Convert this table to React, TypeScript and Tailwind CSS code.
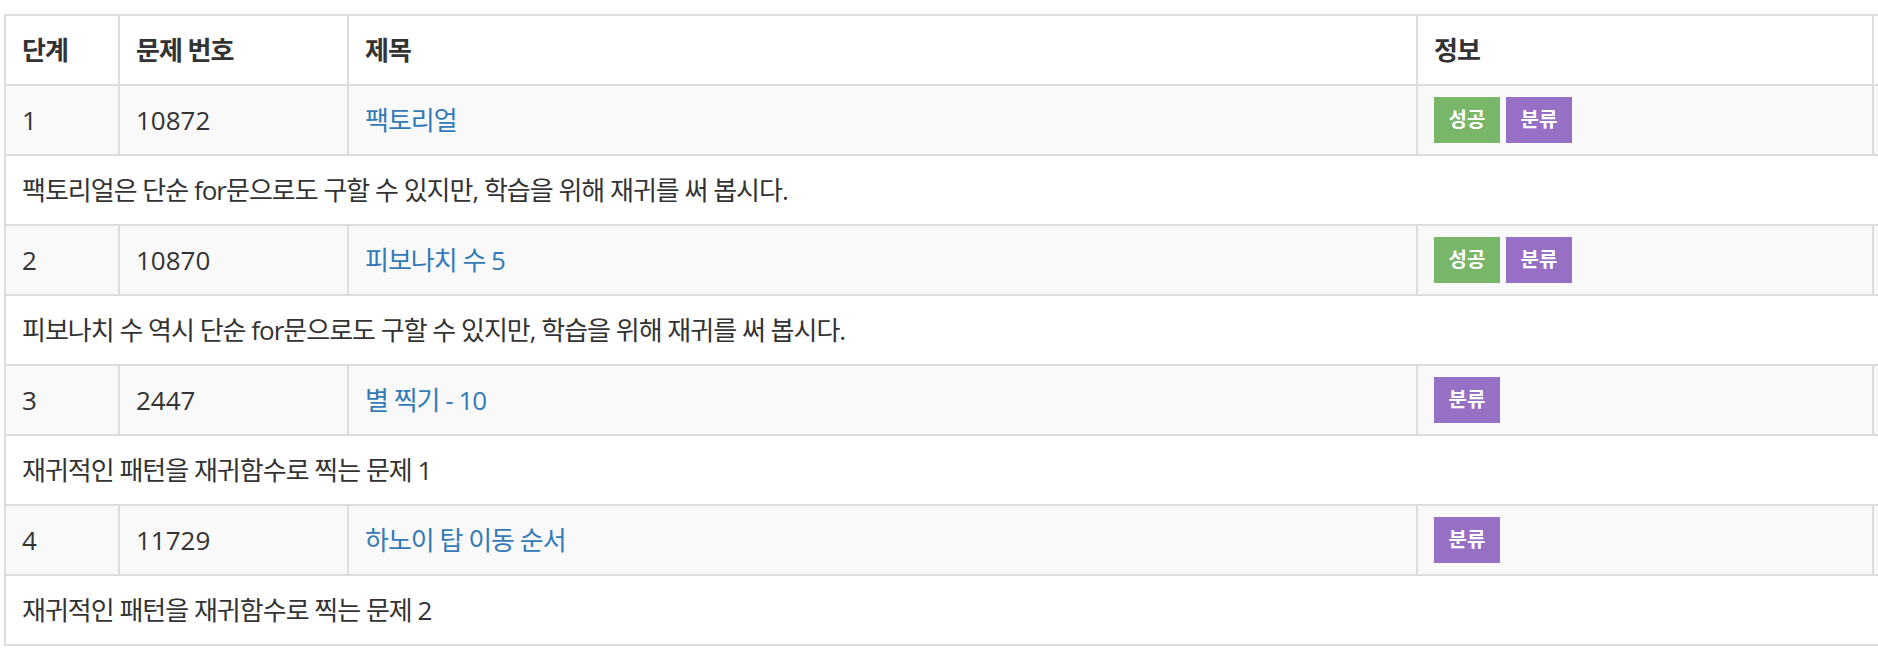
import React from 'react';

type Problem = {
  step: number;
  id: number;
  title: string;
  desc: string;
  solved: boolean;
};

const problems: Problem[] = [
  { step: 1, id: 10872, title: '팩토리얼', desc: '팩토리얼은 단순 for문으로도 구할 수 있지만, 학습을 위해 재귀를 써 봅시다.', solved: true },
  { step: 2, id: 10870, title: '피보나치 수 5', desc: '피보나치 수 역시 단순 for문으로도 구할 수 있지만, 학습을 위해 재귀를 써 봅시다.', solved: true },
  { step: 3, id: 2447, title: '별 찍기 - 10', desc: '재귀적인 패턴을 재귀함수로 찍는 문제 1', solved: false },
  { step: 4, id: 11729, title: '하노이 탑 이동 순서', desc: '재귀적인 패턴을 재귀함수로 찍는 문제 2', solved: false },
];

const cell = 'border-2 border-[#dddddd] px-[16px] py-[15px] leading-[38px] align-middle';
// korean glyphs in the original are a bit narrower than Noto CJK
const ko = 'tracking-[-1px]';

export default function App() {
  return (
    <div
      className="w-[1878px] h-[648px] overflow-hidden bg-white text-[#333333] text-[26px]"
      style={{ fontFamily: '"Open Sans", "Noto Sans CJK KR", sans-serif' }}
    >
      <div className="ml-[4px] mt-[14px]">
        <table className="table-fixed border-collapse w-[2100px]">
          <colgroup>
            <col className="w-[114px]" />
            <col className="w-[229px]" />
            <col className="w-[1069px]" />
            <col className="w-[456px]" />
            <col className="w-[232px]" />
          </colgroup>
          <thead>
            <tr className="bg-white">
              <th className={`${cell} ${ko} text-left font-bold`}>단계</th>
              <th className={`${cell} ${ko} text-left font-bold`}>문제 번호</th>
              <th className={`${cell} ${ko} text-left font-bold`}>제목</th>
              <th className={`${cell} ${ko} text-left font-bold`}>정보</th>
              <th className={`${cell} text-left font-bold`}></th>
            </tr>
          </thead>
          <tbody>
            {problems.map((p) => (
              <React.Fragment key={p.id}>
                <tr className="bg-[#f9f9f9]">
                  <td className={cell}>{p.step}</td>
                  <td className={cell}>{p.id}</td>
                  <td className={`${cell} ${ko}`}>
                    <a href="#" className="text-[#337ab7]">{p.title}</a>
                  </td>
                  <td className={cell}>
                    <div className="flex h-[38px] items-center gap-[6px]">
                      {p.solved && (
                        <span className="flex h-[46px] w-[66px] shrink-0 items-center justify-center bg-[#78b769] text-[20px] font-bold leading-none text-white">
                          성공
                        </span>
                      )}
                      <span className="flex h-[46px] w-[66px] shrink-0 items-center justify-center bg-[#9670c4] text-[20px] font-bold leading-none text-white">
                        분류
                      </span>
                    </div>
                  </td>
                  <td className={cell}></td>
                </tr>
                <tr className="bg-white">
                  <td className={`${cell} ${ko}`} colSpan={5}>{p.desc}</td>
                </tr>
              </React.Fragment>
            ))}
          </tbody>
        </table>
      </div>
    </div>
  );
}
